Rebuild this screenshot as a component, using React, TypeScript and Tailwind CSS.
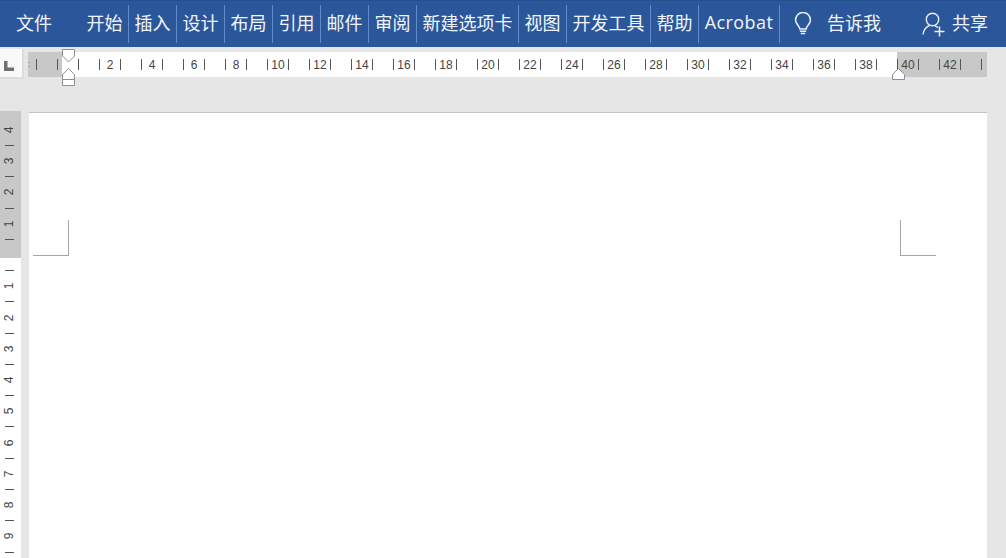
const tabs = [
  { label: "开始", w: "w-[48px]" },
  { label: "插入", w: "w-[48px]" },
  { label: "设计", w: "w-[48px]" },
  { label: "布局", w: "w-[48px]" },
  { label: "引用", w: "w-[48px]" },
  { label: "邮件", w: "w-[48px]" },
  { label: "审阅", w: "w-[48px]" },
  { label: "新建选项卡", w: "w-[102px]" },
  { label: "视图", w: "w-[48px]" },
  { label: "开发工具", w: "w-[84px]" },
  { label: "帮助", w: "w-[48px]" },
];

const hItems = Array.from({ length: 46 }, (_, i) =>
  i >= 3 && i % 2 === 1 && i < 44 ? String(i - 1) : ""
);

const vItems = ["4", "-", "3", "-", "2", "-", "1", "-", "", "-", "1", "-", "2", "-", "3", "-", "4", "-", "5", "-", "6", "-", "7", "-", "8", "-", "9", "-"];

function Bulb() {
  return (
    <svg width="18" height="24" viewBox="0 0 20 26" fill="none" stroke="#eaf0f8" strokeWidth="1.7">
      <path d="M6.5 18.5c0-3-4.8-5.2-4.8-10a8.3 8.3 0 0 1 16.6 0c0 4.800-4.800 7-4.800 10z" />
      <path d="M6.500 21h7M7.500 23.500h5" strokeWidth="1.700" />
    </svg>
  );
}

function Person() {
  return (
    <svg width="24" height="26" viewBox="0 0 24 26" fill="none" stroke="#eaf0f8" strokeWidth="1.400">
      <circle cx="10.500" cy="8.500" r="6.200" />
      <path d="M1 23.500c.6-4.800 3.200-7.500 6.200-8.900M13 15c1.200.3 2.200.9 3 1.700" />
      <path d="M12.500 20.500h10M17.500 15.500v10" strokeWidth="1.500" />
    </svg>
  );
}

function Hourglass() {
  return (
    <svg width="14" height="37" viewBox="0 0 14 37" fill="none" className="absolute left-[62px] top-[49px]">
      <path d="M.5.500h12v6.500l-6 6-6-6z" fill="#fff" stroke="#8f8f8f" />
      <path d="M6.500 19.500l6 6v11h-12v-11z" fill="#fff" stroke="#8f8f8f" />
      <path d="M.5 30.500h12" stroke="#8f8f8f" />
    </svg>
  );
}

function RightMarker() {
  return (
    <svg width="14" height="12" viewBox="0 0 14 12" fill="none" className="absolute left-[892px] top-[68px]">
      <path d="M6.500.5l6 6v5h-12v-5z" fill="#fff" stroke="#8f8f8f" />
    </svg>
  );
}

export default function App() {
  return (
    <div
      className="relative w-[1006px] h-[558px] overflow-hidden bg-[#e6e6e6] flex flex-col"
      style={{ fontFamily: '"Noto Sans CJK SC", "Liberation Sans", sans-serif' }}
    >
      <header className="h-[47px] shrink-0 bg-[#2b579a] border-t border-[#23508f] flex items-center text-[#f1f5fa] text-[18px] font-normal">
        <div className="w-[81px] pl-[16px] pb-[3px]">文件</div>
        {tabs.map((t) => (
          <div
            key={t.label}
            className={`${t.w} h-[38px] pb-[3px] flex items-center justify-center border-r border-[#5f8ccb]`}
          >
            {t.label}
          </div>
        ))}
        <div
          className="w-[81px] h-[38px] pb-[3px] flex items-center justify-center border-r border-[#5f8ccb] text-[18px] font-normal tracking-[0.4px]"
          style={{ fontFamily: '"Open Sans", "Liberation Sans", sans-serif' }}
        >
          Acrobat
        </div>
        <div className="ml-[14px] flex items-center">
          <Bulb />
        </div>
        <div className="ml-[15px] pb-[3px]">告诉我</div>
        <div className="ml-[41px] flex items-center">
          <Person />
        </div>
        <div className="ml-[6px] pb-[3px]">共享</div>
      </header>

      <div className="h-[64px] shrink-0 pt-[5px] flex items-start">
        <div className="w-[24px] h-[30px] mr-[4px] -mt-[3px] bg-[#f9f9f9] border-r-2 border-b-2 border-[#dcdcdc] flex items-center justify-center">
          <svg width="10" height="10" viewBox="0 0 10 10" className="mt-[6px] -ml-[4px]">
            <path d="M0 0h3.500v6.500H10V10H0z" fill="#6f6f6f" />
          </svg>
        </div>
        <div className="relative w-[959px] h-[25px] flex">
          <div className="w-[34px] bg-[#c8c8c8]" />
          <div className="w-[835px] bg-white" />
          <div className="w-[90px] bg-[#c8c8c8]" />
          <div className="absolute inset-0 pl-[8px] flex items-center text-[12px] text-[#444]" style={{ fontFamily: '"Liberation Sans", sans-serif' }}>
            <span className="absolute left-0 text-[9px] text-[#777]">:</span>
            {hItems.map((label, i) => (
              <div key={i} className="w-[21px] h-[11px] shrink-0 border-l border-[#555] flex items-center justify-center leading-none">
                {label}
              </div>
            ))}
          </div>
        </div>
      </div>

      <div className="flex flex-1 min-h-0">
        <div className="relative w-[21px] h-[447px] shrink-0 flex flex-col">
          <div className="h-[147px] bg-[#c8c8c8]" />
          <div className="flex-1 bg-white" />
          <div className="absolute inset-0 pr-[2px] flex flex-col items-center pt-[11px] text-[12px] text-[#444] leading-none" style={{ fontFamily: '"Liberation Sans", sans-serif' }}>
            {vItems.map((v, i) => (
              <div key={i} className="h-[15.650px] w-full shrink-0 flex items-center justify-center">
                {v === "-" ? (
                  <div className="w-[9px] h-px bg-[#555]" />
                ) : (
                  <span className="-rotate-90 inline-block">{v}</span>
                )}
              </div>
            ))}
          </div>
        </div>
        <div className="ml-[8px] mt-px w-[958px] bg-white border-t border-[#c4c4c4] h-[446px] pt-[107px] pl-[4px] pr-[51px] flex justify-between items-start">
          <div className="w-[36px] h-[36px] border-r border-b border-[#a6a6a6]" />
          <div className="w-[36px] h-[36px] border-l border-b border-[#a6a6a6]" />
        </div>
      </div>

      <Hourglass />
      <RightMarker />
    </div>
  );
}
